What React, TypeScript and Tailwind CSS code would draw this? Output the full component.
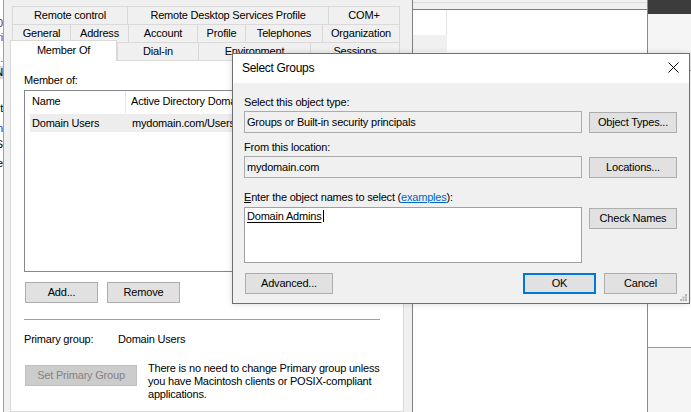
import type { ReactNode } from 'react'

const FRAGMENTS = [
  { top: 'mt-[17px]', text: '10', color: 'text-[#6b2a12]' },
  { top: 'mt-[1px]', text: 'ri', color: 'text-[#7a1f7a]' },
  { top: 'mt-[8px]', text: 'e.', color: 'text-[#7a1f7a]' },
  { top: 'mt-[1px]', text: 'N', color: 'text-black bg-[#d9d9d9]' },
  { top: 'mt-[23px]', text: 't', color: 'text-black' },
  { top: 'mt-[7px]', text: 'n', color: 'text-[#0033cc]' },
  { top: 'mt-[3px]', text: 'S', color: 'text-black' },
  { top: 'mt-[6px]', text: 'e', color: 'text-black' },
]

function Tab({ w, label, last }: { w: string; label: string; last?: boolean }) {
  return (
    <div className={`${w} h-[18px] flex items-center justify-center border-t border-l border-[#d9d9d9] bg-[#f0f0f0] whitespace-nowrap overflow-hidden ${last ? 'border-r' : ''}`}>
      {label}
    </div>
  )
}

function Btn({ w, children, primary, disabled, className = '' }: { w: string; children: ReactNode; primary?: boolean; disabled?: boolean; className?: string }) {
  const look = disabled
    ? 'bg-[#cccccc] border border-[#bfbfbf] text-[#838383]'
    : primary
      ? 'bg-[#e1e1e1] border-2 border-[#0078d7]'
      : 'bg-[#e1e1e1] border border-[#adadad]'
  return (
    <div className={`${w} h-[21px] flex items-center justify-center whitespace-nowrap ${look} ${className}`}>
      {children}
    </div>
  )
}

function SelectGroups() {
  return (
    <div className="absolute left-[232px] top-[53px] w-[458px] h-[251px] border border-[#6e6e6e] bg-[#f0f0f0] flex flex-col shadow-[0_0_6px_rgba(0,0,0,0.15)]">
      {/* title bar */}
      <div className="h-[29px] bg-white flex items-center justify-between pl-[9px] pr-[10px]">
        <span className="text-[12px] tracking-[-0.3px]">Select Groups</span>
        <svg width="11" height="11" viewBox="0 0 11 11" className="mt-[-2px]">
          <path d="M0.5 0.5 L10.5 10.5 M10.5 0.5 L0.5 10.5" stroke="#000" strokeWidth="1" fill="none" />
        </svg>
      </div>

      <div className="flex flex-col px-[11px]">
        <div className="mt-[13px]">Select this object type:</div>
        <div className="mt-[2px] flex items-center gap-[7px]">
          <div className="w-[338px] h-[22px] border border-[#ababab] bg-[#f0f0f0] flex items-center pl-[2px]">Groups or Built-in security principals</div>
          <Btn w="w-[88px]">Object Types...</Btn>
        </div>

        <div className="mt-[8px]">From this location:</div>
        <div className="mt-[2px] flex items-center gap-[7px]">
          <div className="w-[338px] h-[22px] border border-[#ababab] bg-[#f0f0f0] flex items-center pl-[2px]">mydomain.com</div>
          <Btn w="w-[88px]">Locations...</Btn>
        </div>

        <div className="mt-[13px]">
          <span className="underline">E</span>nter the object names to select (<span className="text-[#0066cc] underline">examples</span>):
        </div>
        <div className="mt-[3px] flex items-start gap-[7px]">
          <div className="w-[338px] h-[56px] border border-[#a0a0a0] bg-white pl-[2px] pt-[2px]">
            <span className="underline underline-offset-[2px]">Domain Admins</span>
            <span className="inline-block w-px h-[12px] bg-black align-[-2px] ml-[2px]" />
          </div>
          <Btn w="w-[88px]" className="mt-[1px]">Check Names</Btn>
        </div>

        <div className="mt-[10px] flex items-center">
          <Btn w="w-[88px]" className="ml-[1px]">Advanced...</Btn>
          <div className="flex-1" />
          <Btn w="w-[73px]" primary>OK</Btn>
          <Btn w="w-[73px]" className="ml-[8px] mr-[1px]">Cancel</Btn>
        </div>
      </div>

      {/* resize grip */}
      <svg width="7" height="7" viewBox="0 0 7 7" className="absolute right-[2px] bottom-[2px]">
        <rect x="5" y="0" width="2" height="2" fill="#b5b5b5" />
        <rect x="2.5" y="2.5" width="2" height="2" fill="#b5b5b5" />
        <rect x="5" y="2.5" width="2" height="2" fill="#b5b5b5" />
        <rect x="0" y="5" width="2" height="2" fill="#b5b5b5" />
        <rect x="2.5" y="5" width="2" height="2" fill="#b5b5b5" />
        <rect x="5" y="5" width="2" height="2" fill="#b5b5b5" />
      </svg>
    </div>
  )
}

export default function App() {
  return (
    <div className="relative w-[691px] h-[412px] overflow-hidden flex bg-[#f0f0f0] text-black text-[11px] leading-[13px] tracking-[-0.2px] font-['Liberation_Sans',Arial,sans-serif]">
      {/* window behind, clipped on the left */}
      <div className="w-[3px] h-full bg-white overflow-hidden flex flex-col">
        {FRAGMENTS.map((f, i) => (
          <div key={i} className={`${f.top} h-[13px] flex justify-end whitespace-nowrap ${f.color}`}>{f.text}</div>
        ))}
      </div>

      {/* user properties dialog */}
      <div className="w-[410px] h-full border-l border-[#a0a0a0] border-r border-r-[#808080] bg-[#f0f0f0] flex flex-col pt-[6px] shrink-0">
        <div className="ml-[8px] flex">
          <Tab w="w-[115px]" label="Remote control" />
          <Tab w="w-[201px]" label="Remote Desktop Services Profile" />
          <Tab w="w-[72px]" label="COM+" last />
        </div>
        <div className="ml-[8px] flex">
          <Tab w="w-[58px]" label="General" />
          <Tab w="w-[58px]" label="Address" />
          <Tab w="w-[69px]" label="Account" />
          <Tab w="w-[48px]" label="Profile" />
          <Tab w="w-[77px]" label="Telephones" />
          <Tab w="w-[78px]" label="Organization" last />
        </div>
        <div className="ml-[6px] h-[18px] flex items-end">
          <div className="relative z-10 w-[107px] h-[21px] -mb-px bg-white border-t border-l border-r border-[#d9d9d9] flex items-center justify-center pb-[1px]">Member Of</div>
          <Tab w="w-[81px]" label="Dial-in" />
          <Tab w="w-[112px]" label="Environment" />
          <Tab w="w-[90px]" label="Sessions" last />
        </div>

        {/* tab panel */}
        <div className="ml-[6px] w-[394px] h-[360px] border border-[#d9d9d9] bg-white flex flex-col pl-[13px]">
          <div className="mt-[13px]">Member of:</div>
          <div className="mt-[3px] w-[356px] h-[182px] border border-[#828790] bg-white flex flex-col">
            <div className="h-[22px] flex">
              <div className="w-[101px] border-r border-[#e5e5e5] pl-[7px] pt-[4px]">Name</div>
              <div className="w-[106px] pl-[5px] pt-[4px] whitespace-nowrap overflow-hidden">Active Directory Domain Services Folder</div>
            </div>
            <div className="mt-[1px] ml-[5px] mr-[2px] h-[18px] bg-[#ededed] flex items-center pl-[2px]">
              <div className="w-[100px]">Domain Users</div>
              <div className="whitespace-nowrap">mydomain.com/Users</div>
            </div>
          </div>

          <div className="mt-[10px] flex gap-[9px]">
            <Btn w="w-[73px]" className="ml-[1px]">Add...</Btn>
            <Btn w="w-[73px]">Remove</Btn>
          </div>

          <div className="mt-[16px] w-[356px] h-px bg-[#a0a0a0]" />

          <div className="mt-[13px] flex">
            <div className="w-[94px]">Primary group:</div>
            <div>Domain Users</div>
          </div>

          <div className="mt-[16px] flex items-start">
            <Btn w="w-[112px]" disabled className="mt-[3px] ml-[1px]">Set Primary Group</Btn>
            <div className="ml-[11px] whitespace-nowrap">
              There is no need to change Primary group unless<br />
              you have Macintosh clients or POSIX-compliant<br />
              applications.
            </div>
          </div>
        </div>
      </div>

      {/* window behind, middle */}
      <div className="w-[235px] h-full border-r border-[#8a8a8a] bg-white flex flex-col shrink-0">
        <div className="h-[3px] bg-[#f0f0f0] border-b border-[#dadada]" />
        <div className="h-[7px] bg-[#f0f0f0] border-b border-[#7d7d7d]" />
        <div className="w-[34px] h-[25px] border-r border-[#e3e3e3]" />
        <div className="w-[34px] h-[17px] bg-[#f0f0f0]" />
      </div>

      {/* window behind, right */}
      <div className="flex-1 h-full flex flex-col">
        <div className="h-[14px] bg-[#3c3c3c]" />
        <div className="h-[57px] bg-[#f5f5f5] border-b border-[#9a9a9a]" />
        <div className="h-[277px] bg-white border-b border-[#9a9a9a]" />
        <div className="flex-1 bg-[#f5f5f5]" />
      </div>

      <SelectGroups />
    </div>
  )
}
